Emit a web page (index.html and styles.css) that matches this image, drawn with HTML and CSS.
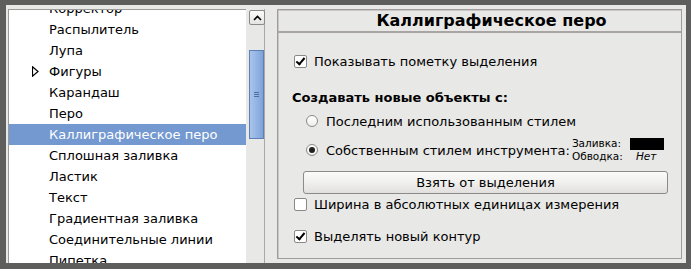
FILE: index.html
```html
<!DOCTYPE html>
<html lang="ru">
<head>
  <meta charset="UTF-8">
  <meta name="viewport" content="width=device-width, initial-scale=1.0">
  <title>Инструменты</title>
  <link rel="stylesheet" href="styles.css">
</head>
<body>
  <div class="window">
    <div class="list">
      <div class="rows">
        <div class="row"><span class="exp"></span>Корректор</div>
        <div class="row"><span class="exp"></span>Распылитель</div>
        <div class="row"><span class="exp"></span>Лупа</div>
        <div class="row"><span class="exp"><svg width="7" height="11" viewBox="0 0 7 11"><path d="M0.5 0.8 L6 5.5 L0.5 10.2 Z" fill="none" stroke="#000" stroke-width="1.2"/></svg></span>Фигуры</div>
        <div class="row"><span class="exp"></span>Карандаш</div>
        <div class="row"><span class="exp"></span>Перо</div>
        <div class="row selected"><span class="exp"></span>Каллиграфическое перо</div>
        <div class="row"><span class="exp"></span>Сплошная заливка</div>
        <div class="row"><span class="exp"></span>Ластик</div>
        <div class="row"><span class="exp"></span>Текст</div>
        <div class="row"><span class="exp"></span>Градиентная заливка</div>
        <div class="row"><span class="exp"></span>Соединительные линии</div>
        <div class="row"><span class="exp"></span>Пипетка</div>
      </div>
    </div>
    <div class="scrollbar">
      <div class="sb-btn"><svg width="9" height="6" viewBox="0 0 9 6"><path d="M1 5 L4.5 1.5 L8 5" fill="none" stroke="#000" stroke-width="1.6"/></svg></div>
      <div class="sb-thumb"><span class="grip"></span></div>
    </div>
    <div class="panel">
      <div class="hdr">Каллиграфическое перо</div>
      <div class="body">
        <label class="chk first"><span class="box checked"></span>Показывать пометку выделения</label>
        <div class="section">Создавать новые объекты с:</div>
        <label class="radio r1"><span class="dot"></span>Последним использованным стилем</label>
        <div class="radio r2">
          <span class="dot on"></span>Собственным стилем инструмента:
          <div class="style-box">
            <span>Заливка:</span><span class="swatch"></span>
            <span>Обводка:</span><span class="none">Нет</span>
          </div>
        </div>
        <button class="btn">Взять от выделения</button>
        <label class="chk c2"><span class="box"></span>Ширина в абсолютных единицах измерения</label>
        <label class="chk c3"><span class="box checked"></span>Выделять новый контур</label>
      </div>
    </div>
  </div>
</body>
</html>
```

FILE: styles.css
```css
body {
  margin: 0;
  background: #5e5e5c;
  font-family: "DejaVu Sans", sans-serif;
  font-size: 13px;
  color: #000;
}
.window {
  margin: 5px 0 0 6px;
  width: 680px;
  height: 258px;
  background: #e8e8e6;
  display: flex;
  padding: 4px 0 0 2px;
  box-sizing: border-box;
}
.list {
  width: 237px;
  background: #fff;
  border-left: 1px solid #9c9a98;
  border-top: 1px solid #9c9a98;
  overflow: hidden;
}
.rows {
  margin-top: -12px;
}
.row {
  height: 21px;
  display: flex;
  align-items: center;
  white-space: nowrap;
}
.row.selected {
  background: #7499d0;
  color: #fff;
}
.exp {
  width: 40px;
  display: flex;
  align-items: center;
  padding-left: 23px;
  box-sizing: border-box;
}
.scrollbar {
  width: 19px;
  border-right: 1px solid #aaa8a6;
  padding: 1px 0 0 3px;
  box-sizing: border-box;
  background: #e8e8e6;
}
.sb-btn {
  width: 14px;
  height: 13px;
  border: 1px solid #8c8a88;
  border-radius: 2px;
  background: linear-gradient(#fcfcfb, #e4e4e2);
  display: flex;
  align-items: center;
  justify-content: center;
}
.sb-thumb {
  margin-top: 25px;
  width: 13px;
  height: 87px;
  border: 1px solid #5d80b8;
  background: linear-gradient(90deg, #a9c4ea, #8fb1e2 60%, #7fa2d6);
  display: flex;
  align-items: center;
  justify-content: center;
}
.grip {
  width: 5px;
  height: 5px;
  border-top: 1px solid #4f6f9f;
  border-bottom: 1px solid #4f6f9f;
  box-sizing: border-box;
  position: relative;
}
.grip::after {
  content: "";
  display: block;
  margin-top: 1px;
  height: 1px;
  background: #4f6f9f;
}
.panel {
  margin-left: 12px;
  width: 405px;
  height: 250px;
  border: 1px solid #a09c9b;
  box-shadow: inset 1px 1px 0 #c9c6c5;
  box-sizing: border-box;
  display: flex;
  flex-direction: column;
}
.hdr {
  height: 21px;
  border-bottom: 2px solid #a9a5a4;
  font-weight: bold;
  font-size: 16px;
  text-align: center;
  line-height: 21px;
  padding-left: 24px;
}
.body {
  padding-left: 16px;
  display: flex;
  flex-direction: column;
}
.chk, .radio {
  display: flex;
  align-items: center;
  white-space: nowrap;
}
.box {
  width: 13px;
  height: 13px;
  border: 1px solid #8b8987;
  border-radius: 2px;
  background: #fff;
  box-sizing: border-box;
  margin-right: 7px;
  position: relative;
}
.box.checked::after {
  content: "";
  position: absolute;
  left: 3px;
  top: 0px;
  width: 3px;
  height: 7px;
  border-right: 2px solid #000;
  border-bottom: 2px solid #000;
  transform: rotate(40deg);
}
.first { height: 22px; margin-top: 17px; }
.section {
  font-weight: bold;
  height: 22px;
  line-height: 22px;
  margin-top: 15px;
  margin-left: -2px;
}
.radio { padding-left: 12px; }
.r1 { height: 22px; margin-top: 1px; }
.r2 { height: 28px; margin-top: 4px; }
.dot {
  width: 12px;
  height: 12px;
  border: 1px solid #8b8987;
  border-radius: 50%;
  background: linear-gradient(#fff, #eeeeec);
  box-sizing: border-box;
  margin-right: 8px;
  display: flex;
  align-items: center;
  justify-content: center;
}
.dot.on::after {
  content: "";
  width: 6px;
  height: 6px;
  border-radius: 50%;
  background: #222;
}
.style-box {
  display: grid;
  grid-template-columns: 58px auto;
  font-size: 10.5px;
  line-height: 13px;
  margin-left: 2px;
  align-items: center;
}
.swatch {
  width: 34px;
  height: 12px;
  background: #000;
}
.none {
  font-style: italic;
  padding-left: 6px;
}
.btn {
  margin: 7px 13px 0 9px;
  height: 23px;
  border: 1px solid #8d8b89;
  border-radius: 3px;
  background: linear-gradient(#fbfbfa, #f1f1ef 45%, #e2e0de);
  font-family: "DejaVu Sans", sans-serif;
  font-size: 13px;
  color: #000;
  padding: 0;
}
.c2 { height: 21px; margin-top: 0; }
.c3 { height: 22px; margin-top: 10px; }
```
